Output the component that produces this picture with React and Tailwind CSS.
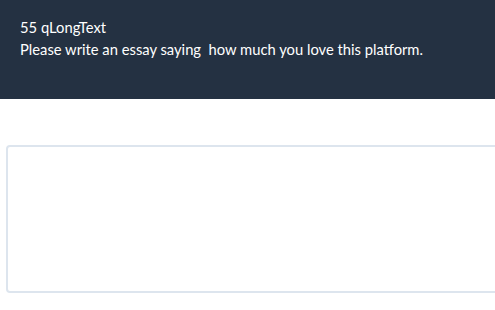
export default function App() {
  return (
    <div className="min-h-[310px] bg-white font-['Lato','Liberation_Sans',sans-serif] overflow-hidden">
      <div className="bg-[#243142] h-[99px] px-5 pt-[16px] text-white text-[14.75px] leading-[22px]">
        <div>55 qLongText</div>
        <div className="whitespace-pre">Please write an essay saying  how much you love this platform.</div>
      </div>
      <div className="pt-[46px] pl-[6px]">
        <textarea className="block w-[520px] h-[148px] border-2 border-[#dde5ee] rounded-[4px] resize-none outline-none" />
      </div>
    </div>
  );
}
